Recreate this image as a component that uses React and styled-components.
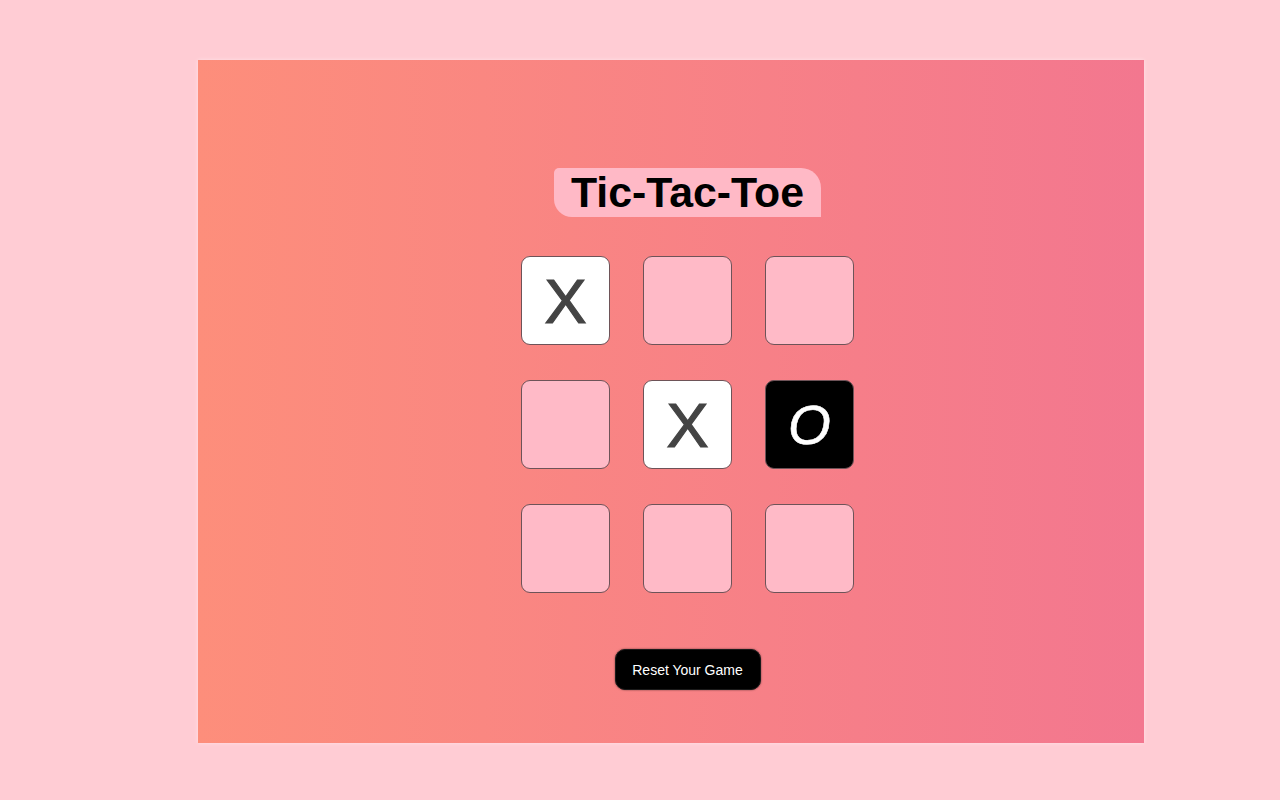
import React, { useState } from "react";
import styled, { createGlobalStyle } from "styled-components";

const GlobalStyle = createGlobalStyle`
  html, body {
    margin: 0;
    padding: 0;
    background: #ffccd4;
    font-family: "Liberation Sans", Arial, sans-serif;
  }
`;

const Page = styled.div`
  width: 1280px;
  height: 800px;
  padding: 60px 0 0 198px;
  box-sizing: border-box;
`;

const Panel = styled.main`
  width: 946px;
  height: 683px;
  box-sizing: border-box;
  padding: 108px 0 0 33px;
  background: linear-gradient(to right, #fd8e7b 0%, #f3778f 100%);
  box-shadow: 0 0 4px rgba(255, 255, 255, 0.45);
  display: flex;
  flex-direction: column;
  align-items: center;
`;

const Title = styled.h1`
  margin: 0;
  padding: 0 17px;
  height: 49px;
  line-height: 49px;
  background: #ffb9c6;
  border-radius: 5px 20px 0 18px;
  font-size: 42.8px;
  font-weight: 700;
  color: #000;
`;

const Board = styled.div`
  margin-top: 39px;
  display: grid;
  grid-template-columns: repeat(3, 89px);
  grid-auto-rows: 89px;
  column-gap: 33px;
  row-gap: 35px;
`;

const Cell = styled.button`
  box-sizing: border-box;
  width: 89px;
  height: 89px;
  padding: 0;
  border: 1px solid #6e5358;
  border-radius: 9px;
  background: ${(p) =>
    p.$mark === "X" ? "#ffffff" : p.$mark === "O" ? "#000000" : "#ffbac7"};
  color: ${(p) => (p.$mark === "O" ? "#ffffff" : "#444444")};
  -webkit-text-stroke: ${(p) => (p.$mark === "X" ? "1.2px #444444" : "0.6px #ffffff")};
  font-family: "Liberation Sans", Arial, sans-serif;
  font-size: ${(p) => (p.$mark === "O" ? "55px" : "63px")};
  font-style: ${(p) => (p.$mark === "O" ? "italic" : "normal")};
  font-weight: 400;
  display: flex;
  align-items: center;
  justify-content: center;
  cursor: pointer;
`;

const ResetButton = styled.button`
  margin-top: 56px;
  box-sizing: border-box;
  width: 146px;
  height: 41px;
  padding: 0 16px;
  border: 1px solid #1a1a1a;
  border-radius: 10px;
  background: #000;
  color: #fff;
  font-family: "Liberation Sans", Arial, sans-serif;
  font-size: 14px;
  box-shadow: 0 0 2px rgba(0, 0, 0, 0.6);
  cursor: pointer;
`;

const initial = ["X", "", "", "", "X", "O", "", "", ""];

export default function App() {
  const [cells, setCells] = useState(initial);
  return (
    <>
      <GlobalStyle />
      <Page>
        <Panel>
          <Title>Tic-Tac-Toe</Title>
          <Board>
            {cells.map((m, i) => (
              <Cell key={i} $mark={m}>
                {m}
              </Cell>
            ))}
          </Board>
          <ResetButton onClick={() => setCells(Array(9).fill(""))}>
            Reset Your Game
          </ResetButton>
        </Panel>
      </Page>
    </>
  );
}
